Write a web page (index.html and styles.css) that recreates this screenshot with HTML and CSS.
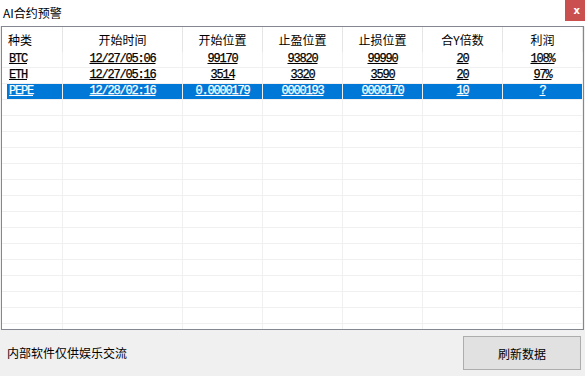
FILE: index.html
```html
<!DOCTYPE html>
<html lang="zh">
<head>
<meta charset="utf-8">
<title>AI合约预警</title>
<link rel="stylesheet" href="styles.css">
</head>
<body>
<div class="window">
  <div class="titlebar">
    <span class="title">AI合约预警</span>
    <span class="close">x</span>
  </div>
  <div class="list">
    <div class="row head">
      <div class="cell first">种类</div>
      <div class="cell">开始时间</div>
      <div class="cell">开始位置</div>
      <div class="cell">止盈位置</div>
      <div class="cell">止损位置</div>
      <div class="cell">合Y倍数</div>
      <div class="cell">利润</div>
    </div>
    <div class="row data">
      <div class="cell first"><u>BTC</u></div>
      <div class="cell"><u>12/27/05:06</u></div>
      <div class="cell"><u>99170</u></div>
      <div class="cell"><u>93820</u></div>
      <div class="cell"><u>99990</u></div>
      <div class="cell"><u>20</u></div>
      <div class="cell"><u>108%</u></div>
    </div>
    <div class="row data">
      <div class="cell first"><u>ETH</u></div>
      <div class="cell"><u>12/27/05:16</u></div>
      <div class="cell"><u>3514</u></div>
      <div class="cell"><u>3320</u></div>
      <div class="cell"><u>3590</u></div>
      <div class="cell"><u>20</u></div>
      <div class="cell"><u>97%</u></div>
    </div>
    <div class="row data selected">
      <div class="cell first"><u>PEPE</u></div>
      <div class="cell"><u>12/28/02:16</u></div>
      <div class="cell"><u>0.0000179</u></div>
      <div class="cell"><u>0000193</u></div>
      <div class="cell"><u>0000170</u></div>
      <div class="cell"><u>10</u></div>
      <div class="cell"><u>?</u></div>
    </div>
    <div class="row data"><div class="cell first"></div><div class="cell"></div><div class="cell"></div><div class="cell"></div><div class="cell"></div><div class="cell"></div><div class="cell"></div></div>
    <div class="row data"><div class="cell first"></div><div class="cell"></div><div class="cell"></div><div class="cell"></div><div class="cell"></div><div class="cell"></div><div class="cell"></div></div>
    <div class="row data"><div class="cell first"></div><div class="cell"></div><div class="cell"></div><div class="cell"></div><div class="cell"></div><div class="cell"></div><div class="cell"></div></div>
    <div class="row data"><div class="cell first"></div><div class="cell"></div><div class="cell"></div><div class="cell"></div><div class="cell"></div><div class="cell"></div><div class="cell"></div></div>
    <div class="row data"><div class="cell first"></div><div class="cell"></div><div class="cell"></div><div class="cell"></div><div class="cell"></div><div class="cell"></div><div class="cell"></div></div>
    <div class="row data"><div class="cell first"></div><div class="cell"></div><div class="cell"></div><div class="cell"></div><div class="cell"></div><div class="cell"></div><div class="cell"></div></div>
    <div class="row data"><div class="cell first"></div><div class="cell"></div><div class="cell"></div><div class="cell"></div><div class="cell"></div><div class="cell"></div><div class="cell"></div></div>
    <div class="row data"><div class="cell first"></div><div class="cell"></div><div class="cell"></div><div class="cell"></div><div class="cell"></div><div class="cell"></div><div class="cell"></div></div>
    <div class="row data"><div class="cell first"></div><div class="cell"></div><div class="cell"></div><div class="cell"></div><div class="cell"></div><div class="cell"></div><div class="cell"></div></div>
    <div class="row data"><div class="cell first"></div><div class="cell"></div><div class="cell"></div><div class="cell"></div><div class="cell"></div><div class="cell"></div><div class="cell"></div></div>
    <div class="row data"><div class="cell first"></div><div class="cell"></div><div class="cell"></div><div class="cell"></div><div class="cell"></div><div class="cell"></div><div class="cell"></div></div>
    <div class="row data"><div class="cell first"></div><div class="cell"></div><div class="cell"></div><div class="cell"></div><div class="cell"></div><div class="cell"></div><div class="cell"></div></div>
    <div class="row data"><div class="cell first"></div><div class="cell"></div><div class="cell"></div><div class="cell"></div><div class="cell"></div><div class="cell"></div><div class="cell"></div></div>
    <div class="row data"><div class="cell first"></div><div class="cell"></div><div class="cell"></div><div class="cell"></div><div class="cell"></div><div class="cell"></div><div class="cell"></div></div>
    <div class="row data"><div class="cell first"></div><div class="cell"></div><div class="cell"></div><div class="cell"></div><div class="cell"></div><div class="cell"></div><div class="cell"></div></div>
  </div>
  <div class="footer">
    <span class="note">内部软件仅供娱乐交流</span>
    <button class="refresh">刷新数据</button>
  </div>
</div>
</body>
</html>
```

FILE: styles.css
```css
html, body {
  margin: 0;
  padding: 0;
  background: #f0f0f0;
}
body {
  font-family: "Noto Sans CJK SC", "Noto Sans", sans-serif;
  font-size: 12px;
  color: #000;
}
.window {
  width: 585px;
  height: 376px;
  display: flex;
  flex-direction: column;
  overflow: hidden;
}
.titlebar {
  height: 26px;
  background: #fff;
  display: flex;
  align-items: flex-start;
}
.title {
  padding-left: 3px;
  line-height: 25px;
  font-size: 12px;
}
.close {
  margin-left: auto;
  width: 20px;
  height: 21px;
  background: #c9504f;
  color: #fff;
  font-family: "DejaVu Sans", sans-serif;
  font-weight: bold;
  font-size: 10px;
  line-height: 21px;
  text-align: right;
  box-sizing: border-box;
  padding-right: 5px;
}
.list {
  margin-left: 1px;
  width: 583px;
  height: 304px;
  box-sizing: border-box;
  border: 1px solid #828790;
  background: #fff;
  overflow: hidden;
}
.row {
  display: grid;
  grid-template-columns: 61px 120px 80px 80px 80px 80px 80px;
}
.head {
  height: 25px;
}
.head .cell {
  line-height: 25px;
  border-right: 1px solid #e5e5e5;
  text-align: center;
  font-size: 12px;
}
.head .cell.first {
  text-align: left;
  padding-left: 6px;
}
.data {
  height: 16px;
}
.data .cell {
  height: 16px;
  box-sizing: border-box;
  border-right: 1px solid #f0f0f0;
  border-bottom: 1px solid #f0f0f0;
  text-align: center;
  font-family: "Liberation Mono", "DejaVu Sans Mono", monospace;
  font-size: 12px;
  letter-spacing: -1.2px;
  line-height: 15px;
  white-space: nowrap;
  overflow: hidden;
  -webkit-text-stroke: 0.25px currentColor;
}
.data .cell.first {
  text-align: left;
  padding-left: 7px;
}
.cell u {
  text-underline-offset: 1px;
  text-decoration-thickness: 1px;
}
.selected .cell {
  background: #0078d7;
  color: #fff;
}
.selected .cell.first {
  background: linear-gradient(to right, #fff 5px, #0078d7 5px);
}
.footer {
  flex: 1;
  background: #f0f0f0;
  display: flex;
  align-items: flex-start;
  padding-top: 6px;
}
.note {
  margin-left: 7px;
  margin-top: 8px;
  font-size: 12px;
  line-height: 17px;
}
.refresh {
  margin-left: auto;
  margin-right: 4px;
  width: 118px;
  height: 34px;
  background: #e1e1e1;
  border: 1px solid #adadad;
  font-family: "Noto Sans CJK SC", "Noto Sans", sans-serif;
  font-size: 12px;
  color: #000;
  padding: 0;
}
```
